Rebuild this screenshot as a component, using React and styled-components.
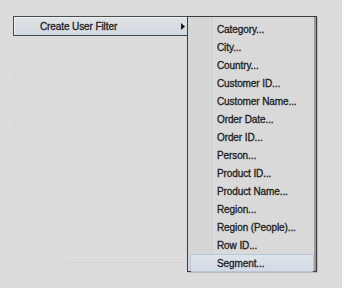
import styled, { createGlobalStyle } from "styled-components";

const GlobalStyle = createGlobalStyle`
    html, body {
        margin: 0;
        padding: 0;
        background: #dcdcdc;
    }
    body {
        font-family: "Liberation Sans", Arial, sans-serif;
    }
`;

const items = [
    "Category...",
    "City...",
    "Country...",
    "Customer ID...",
    "Customer Name...",
    "Order Date...",
    "Order ID...",
    "Person...",
    "Product ID...",
    "Product Name...",
    "Region...",
    "Region (People)...",
    "Row ID...",
    "Segment...",
];

function Arrow() {
    return (
        <svg width="4" height="7" viewBox="0 0 4 7">
            <path d="M0 0 L4 3.5 L0 7 Z" fill="#1a1a1a" />
        </svg>
    );
}

export default function App() {
    return (
        <Page>
            <GlobalStyle />
            <Canvas>
                <Ghost $left={13} $width={56} />
                <Ghost $left={126} $width={56} />
                <FaintLine />
            </Canvas>
            <MenuRow>
                <ParentItem>
                    <span>Create User Filter</span>
                    <Arrow />
                </ParentItem>
                <SubMenu>
                    {items.map((label, i) => (
                        <SubItem key={label} $active={i === items.length - 1}>
                            {label}
                        </SubItem>
                    ))}
                </SubMenu>
            </MenuRow>
        </Page>
    );
}

const Page = styled.div`
    position: relative;
    width: 342px;
    height: 288px;
    background: #dcdcdc;
    overflow: hidden;
`;

const Canvas = styled.div`
    position: absolute;
    inset: 0;
`;

const Ghost = styled.div`
    position: absolute;
    top: 72px;
    left: ${(p) => p.$left}px;
    width: ${(p) => p.$width}px;
    height: 54px;
    border: 1px solid #d9d9d9;
    background: #dbdbdb;
`;

const FaintLine = styled.div`
    position: absolute;
    top: 262px;
    left: 65px;
    width: 120px;
    height: 1px;
    background: #d3d3d3;
`;

const MenuRow = styled.div`
    position: relative;
    display: flex;
    align-items: flex-start;
    padding: 16px 0 0 13px;
`;

const ParentItem = styled.div`
    box-sizing: border-box;
    width: 175px;
    height: 20px;
    display: flex;
    align-items: center;
    justify-content: space-between;
    padding: 0 3px 0 26px;
    border: 1px solid #4a4a4a;
    border-right: none;
    background: linear-gradient(#dfe3e8, #d3d9e0);
    box-shadow: inset 1px 1px 0 #eef1f4;
    font-size: 10px;
    letter-spacing: -0.1px;
    color: #1c1c1c;
    -webkit-text-stroke: 0.3px #1c1c1c;
`;

const SubMenu = styled.div`
    box-sizing: border-box;
    width: 130px;
    height: 256px;
    margin-left: -1px;
    padding: 3px 2px;
    border: 1px solid #3c3c3c;
    background: linear-gradient(
        to right,
        #d6d6d6 0,
        #d6d6d6 24px,
        #cdcdcd 24px,
        #cdcdcd 25px,
        #e0e0e0 25px,
        #d9d9d9 26px
    );
    box-shadow: inset -2px 0 0 #9a9a9a, 1px 1px 0 #bdbdbd;
`;

const SubItem = styled.div`
    box-sizing: border-box;
    height: 18px;
    display: flex;
    align-items: center;
    padding-left: 26px;
    font-size: 10px;
    letter-spacing: -0.1px;
    color: #1c1c1c;
    -webkit-text-stroke: 0.3px #1c1c1c;
    white-space: nowrap;
    border: 1px solid ${(p) => (p.$active ? "#b9c7d6" : "transparent")};
    border-radius: 2px;
    background: ${(p) => (p.$active ? "linear-gradient(#dde3ea, #d2dae3)" : "transparent")};
`;
